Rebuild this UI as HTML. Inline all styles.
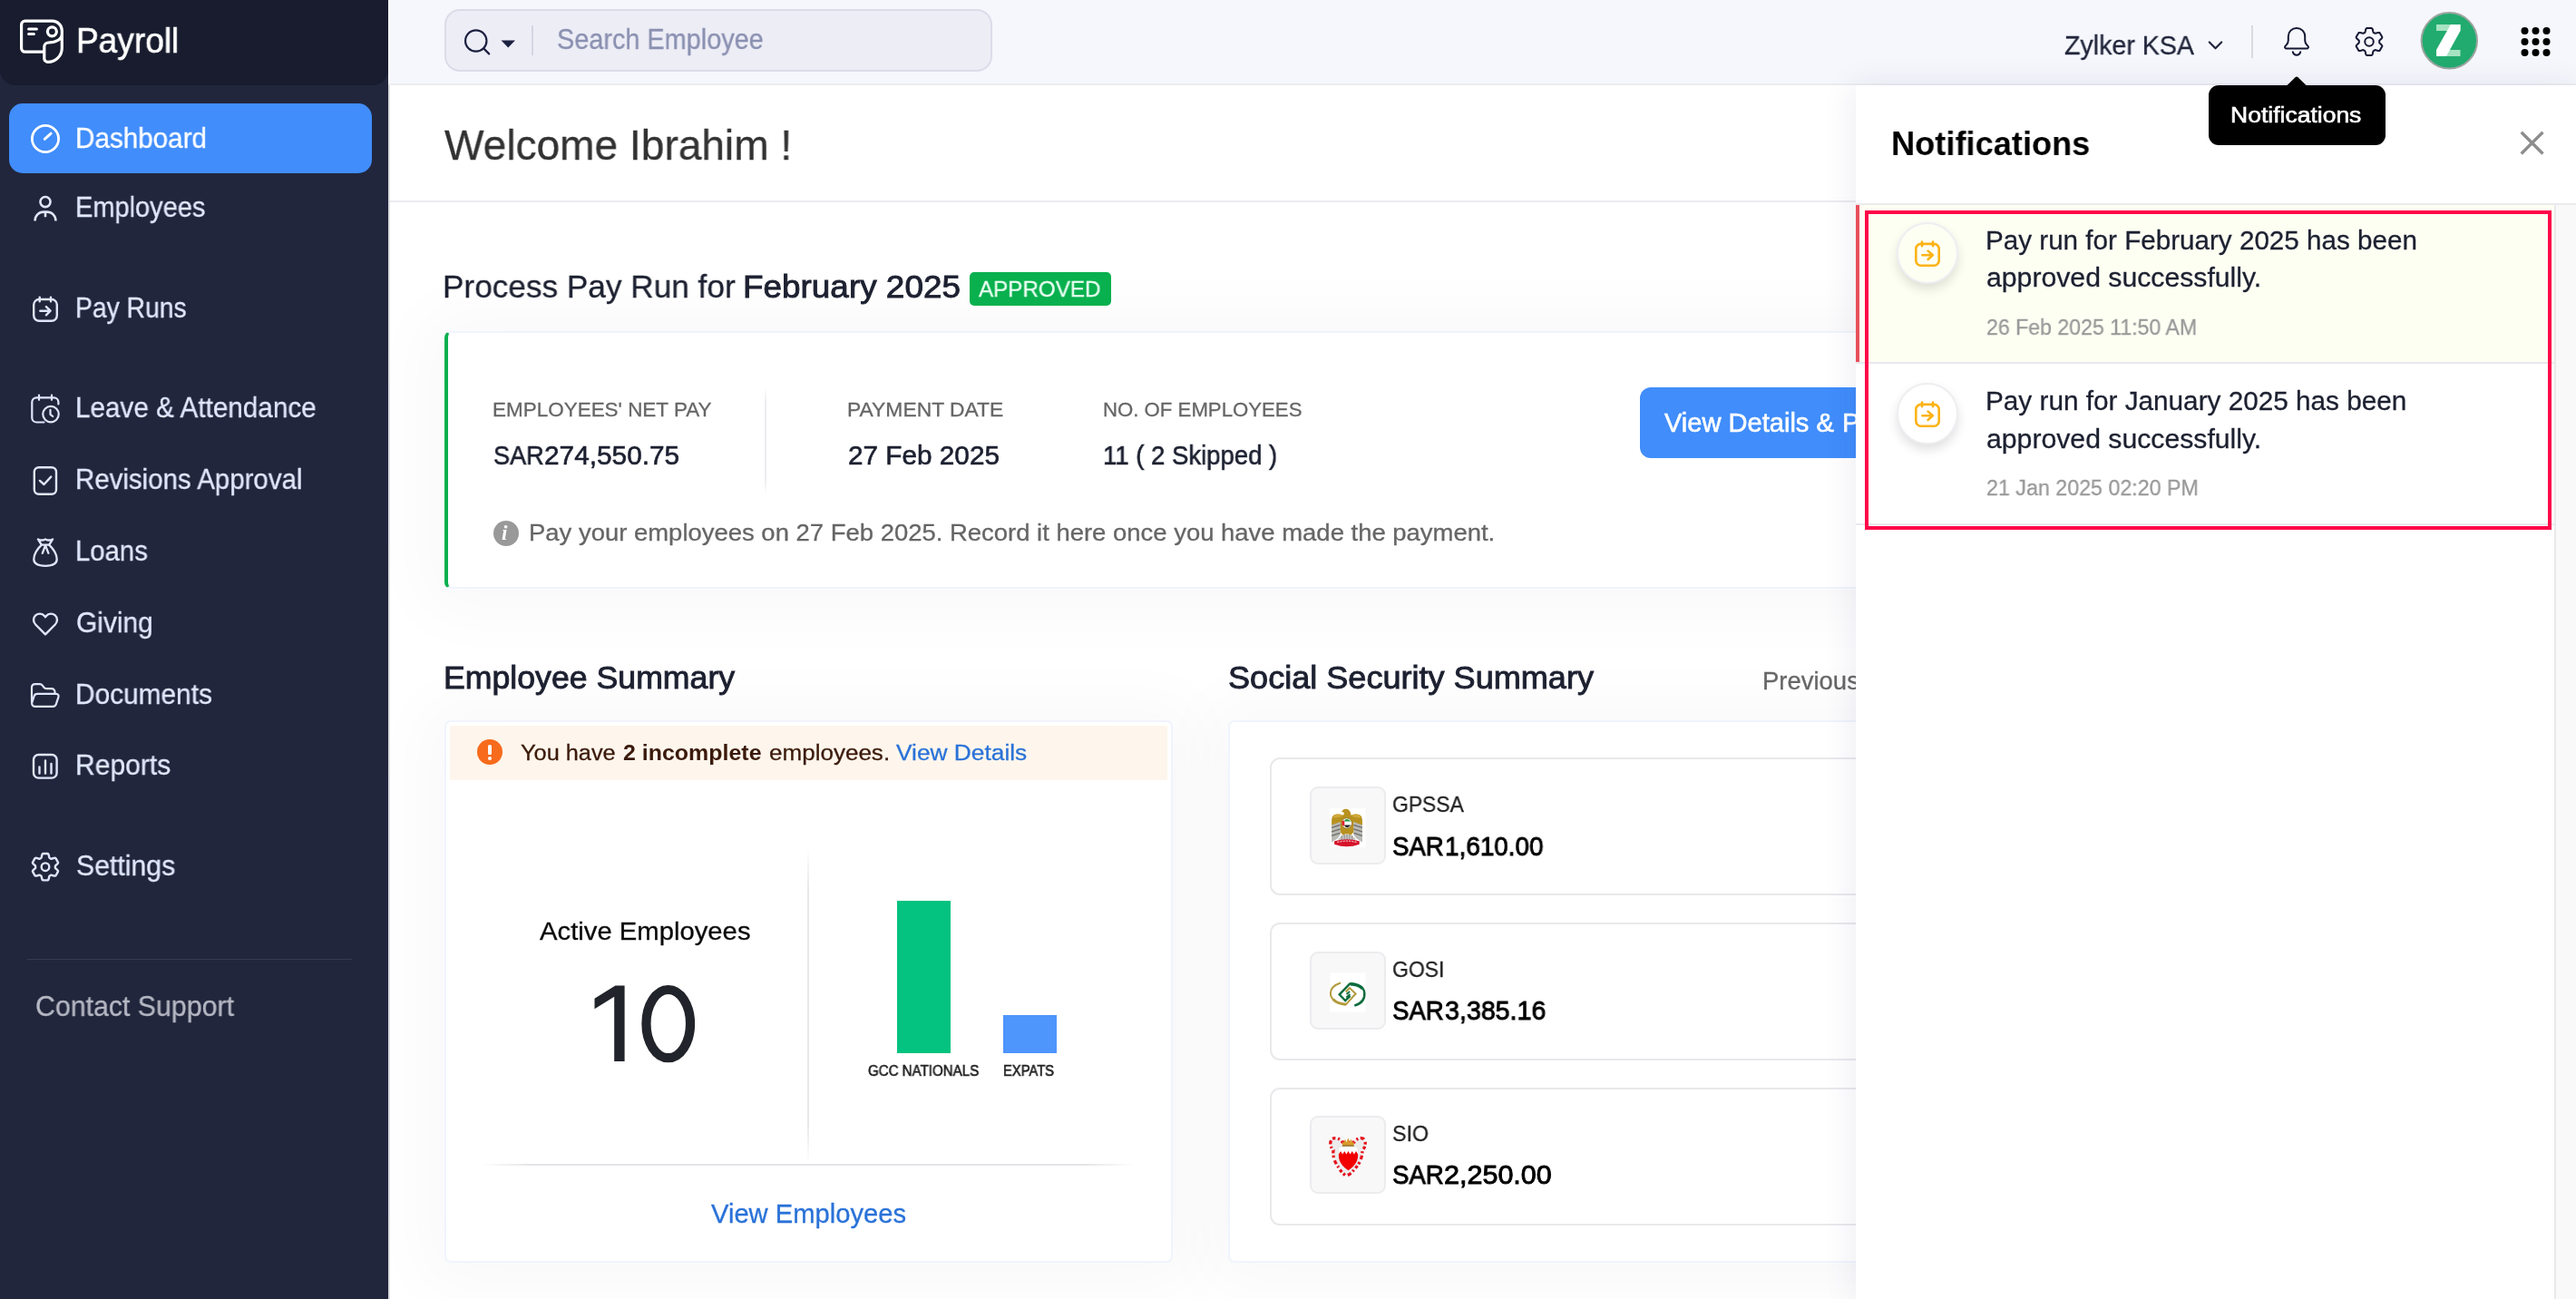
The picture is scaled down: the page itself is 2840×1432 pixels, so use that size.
<!DOCTYPE html>
<html lang="en"><head><meta charset="utf-8"><title>Payroll</title><style>
*{box-sizing:border-box}
html,body{margin:0;padding:0}
body{width:2840px;height:1432px;overflow:hidden;background:#fff;font-family:"Liberation Sans",sans-serif;position:relative}
.L{position:absolute;left:0;top:0;width:2840px;height:1432px;overflow:hidden}
.L>*{position:absolute}
.t{position:absolute;line-height:1;white-space:nowrap;will-change:transform;transform-origin:0 0}
svg.ov{position:absolute;left:0;top:0;width:2840px;height:1432px;pointer-events:none}
.card{background:#fff;border:2px solid #f0f4fc;border-radius:7px;box-shadow:0 4px 70px 24px rgba(40,40,90,.028)}
.ssi{background:#fff;border:2px solid #e9e9ec;border-radius:11px}
.lg{background:#f8f8f9;border:2px solid #ececef;border-radius:9px}
</style></head>
<body>
<div class="L" id="main" style="z-index:1">
<div style="left:428px;top:94px;width:2px;height:1338px;background:#dcdce2"></div>
<div style="left:430px;top:221px;width:2410px;height:2px;background:#ebebef"></div>
<div class="card" style="left:490px;top:365px;width:2292px;height:284px;border-left:4px solid #08b04e"></div>
<div style="left:843px;top:427px;width:2px;height:118px;background:linear-gradient(#fff,#ececf0 15%,#ececf0 85%,#fff)"></div>
<div style="left:1069px;top:300px;width:155.5px;height:37px;background:#08b04e;border-radius:5px"></div>
<div style="left:544px;top:573.5px;width:28px;height:28px;border-radius:50%;background:#999"></div>
<div class="t" style="left:552.5px;top:575.5px;font:italic bold 23px/1 'Liberation Serif',serif;color:#fff">i</div>
<div style="left:1808px;top:427px;width:330px;height:78px;background:#408dfb;border-radius:12px"></div>
<div class="card" style="left:490px;top:794px;width:803px;height:598px"></div>
<div style="left:496px;top:800px;width:791px;height:60px;background:#fef6ec"></div>
<div style="left:526px;top:815px;width:28px;height:28px;border-radius:50%;background:#f76b1c"></div>
<div style="left:538.3px;top:820.5px;width:3.6px;height:11px;background:#fff;border-radius:1.8px 1.8px 1.2px 1.2px"></div>
<div style="left:538px;top:833.5px;width:4.2px;height:4.2px;background:#fff;border-radius:50%"></div>
<div style="left:889.5px;top:935px;width:2px;height:348px;background:linear-gradient(#fff,#e9e9ec 12%,#e9e9ec 88%,#fff)"></div>
<div style="left:530px;top:1283px;width:722px;height:2px;background:linear-gradient(90deg,#fff,#e4e4e8 8%,#e4e4e8 92%,#fff)"></div>
<div style="left:988.5px;top:993px;width:59px;height:168px;background:#04c27f"></div>
<div style="left:1105.7px;top:1119px;width:59.3px;height:42px;background:#4e95fc"></div>
<div class="card" style="left:1354px;top:794px;width:803px;height:598px"></div>
<div class="ssi" style="left:1400px;top:835px;width:712px;height:152px"></div>
<div class="lg" style="left:1444px;top:866.5px;width:84px;height:86px"></div>
<div class="ssi" style="left:1400px;top:1017px;width:712px;height:152px"></div>
<div class="lg" style="left:1444px;top:1048.5px;width:84px;height:86px"></div>
<div class="ssi" style="left:1400px;top:1198.5px;width:712px;height:152px"></div>
<div class="lg" style="left:1444px;top:1230.0px;width:84px;height:86px"></div>
<svg class="ov" viewBox="0 0 2840 1432"><path d="M688.600 1086.500H678.400L655.500 1100.800V1112.300L677.200 1098.800V1170H688.600Z" fill="#21242a"/><ellipse cx="736.750" cy="1128.600" rx="24.300" ry="37.600" fill="none" stroke="#21242a" stroke-width="10.200"/><rect x="1466.3" y="890.9" width="39.200" height="43.100" fill="#fff"/><g transform="translate(1466.3,890.9)"><path d="M1.800 17L11.500 14V29L8 33.500L1.800 37.500ZM35.600 17L25.900 14V29L29.400 33.500L35.600 37.500Z" fill="#b9b9b6"/><path d="M1.800 21.500L11.500 18.500M1.800 26L11.500 23M1.800 30.500L11 27.500M35.600 21.500L25.900 18.500M35.600 26L25.900 23M35.600 30.500L26.400 27.500" stroke="#6f6d66" stroke-width="1.300" fill="none"/><path d="M9 33.500Q18.700 24 28.400 33.500L27 36.500H10.400Z" fill="#c9c9c6"/><path d="M13 30V35M15.800 28.800V35M18.700 28.400V35M21.600 28.800V35M24.400 30V35" stroke="#8b8b86" stroke-width="1" fill="none"/><path d="M17.800 .8C15.300 .5 13.600 1.800 12.800 4L15.200 4.500C15.700 5.900 15.400 7.100 14.200 7.900C11.200 6.400 7.700 6.100 5.200 7.100C2.800 8.300 1.800 10.600 1.800 13.600V18.500L11.500 15.200V26.500L14.500 29.800C17 28 20.400 28 22.900 29.800L25.900 26.500V15.200L35.600 18.500V13.600C35.600 10.600 34.600 8.300 32.200 7.100C29.700 6.100 26.200 6.400 23.200 7.900C22.900 4.400 21.600 1.400 17.800 .8Z" fill="#b8911f"/><path d="M5.200 7.100C7.700 6.100 11.200 6.400 14.200 7.900C12 10 8 11 3.500 10.500C3.800 9 4.300 7.900 5.200 7.100ZM32.200 7.100C29.700 6.100 26.200 6.400 23.200 7.900C25.400 10 29.400 11 33.900 10.500C33.600 9 33.100 7.900 32.200 7.100Z" fill="#cfa93a"/><circle cx="18.500" cy="16.600" r="5.700" fill="#fff" stroke="#8a6a14" stroke-width=".8"/><path d="M13.600 14.200A5.200 5.200 0 0 0 13.600 19.000L16 19.500V13.700Z" fill="#e5202a"/><path d="M16 13.600Q18.500 10.200 23 14.600H16Z" fill="#1f9a46"/><path d="M16 18.700H23Q19 23.500 16 19.600Z" fill="#222"/><path d="M4.800 36.300Q18.700 32.300 32.400 36.300V39.800Q18.700 44.800 4.800 39.800Z" fill="#d5132a"/><path d="M8 37.600Q18.700 34.800 29.200 37.600" stroke="#f4a9b2" stroke-width="1.300" fill="none" stroke-dasharray="2.200 1"/></g><rect x="1466.3" y="1072.5" width="39.200" height="43.100" fill="#fff"/><g transform="translate(1466.3,1072.5)" fill="none" stroke-linejoin="miter"><path d="M11.700 11C4 13.500 .6 18 .6 22.700C.6 29 8 34 17.600 34.800L28.300 23L21.600 16.600L17.400 21" stroke="#b39a3c" stroke-width="2"/><path d="M3.200 29C6.500 32.500 11.500 34.300 17.600 34.800" stroke="#b39a3c" stroke-width="3"/><path d="M27 36.200C34 34 38.600 29 38 22C37.500 15.500 30 12 21.900 11.900L10.400 23.800L16.900 30.500L22.300 25.400" stroke="#0c6b3c" stroke-width="2.400"/><path d="M22.500 12.300C28 12.500 33 14 36 17.500" stroke="#0c6b3c" stroke-width="3.400"/><path d="M21.800 20.600L18.200 23.400M22.200 23.600L18 27" stroke="#0c6b3c" stroke-width="1.900"/></g><g transform="translate(1466,1253.2)"><path d="M3 2C8 0 12 3 14 6H27C29 3 33 0 37 2C41 6 39 12 36 15C36 24 32 31 27 36C25 39 22 42 18 43C15 41 12 38 10 34C6 29 3 22 4 15C1 12-1 6 3 2Z" fill="#ececec"/><path d="M3 2C8 0 12 3 14 6H27C29 3 33 0 37 2C41 6 39 12 36 15C36 24 32 31 27 36C25 39 22 42 18 43C15 41 12 38 10 34C6 29 3 22 4 15C1 12-1 6 3 2Z" fill="none" stroke="#e5121d" stroke-width="3.300" stroke-dasharray="3.400 2.800 2 2.600 4.400 3.200 2.600 2.200"/><path d="M9.900 11H31.100V21C31 28 26 33.500 20.500 37C15 33.500 10 28 9.900 21Z" fill="#fff" stroke="#ddd" stroke-width=".6"/><path d="M9.900 19.400L12 15.700L14.100 19.400L16.300 15.700L18.400 19.400L20.500 15.700L22.600 19.400L24.700 15.700L26.900 19.400L29 15.700L31.100 19.400V21C31 28 26 33.500 20.500 37C15 33.500 10 28 9.900 21Z" fill="#f20000"/><path d="M13.900 10.300V5L15.500 6.500L17 2.500L18.600 6L20.300 1.100L22 6L23.600 2.500L25.100 6.500L26.700 5V10.300Z" fill="#d99a2b"/><path d="M13.900 9.800H26.700" stroke="#7a5e26" stroke-width="1"/></g></svg>
<div class="t" style="left:490.00px;top:137.00px;font-size:46.51px;color:#323232;transform:scaleX(0.9909);-webkit-text-stroke:0.3px #323232;">Welcome Ibrahim !</div>
<div class="t" style="left:488.00px;top:299.00px;font-size:35.41px;color:#1c2030;transform:scaleX(0.9938);-webkit-text-stroke:0.3px #1c2030;">Process Pay Run for</div>
<div class="t" style="left:819.00px;top:299.00px;font-size:35.41px;color:#1c2030;transform:scaleX(1.0419);-webkit-text-stroke:0.9px #1c2030;">February 2025</div>
<div class="t" style="left:1079.00px;top:307.00px;font-size:24.84px;color:#eafff2;transform:scaleX(0.9745);-webkit-text-stroke:0.3px #eafff2;">APPROVED</div>
<div class="t" style="left:543.00px;top:441.00px;font-size:22.2px;color:#666666;transform:scaleX(1.0127);-webkit-text-stroke:0.3px #666666;">EMPLOYEES' NET PAY</div>
<div class="t" style="left:934.00px;top:441.00px;font-size:22.2px;color:#666666;transform:scaleX(1.0303);-webkit-text-stroke:0.3px #666666;">PAYMENT DATE</div>
<div class="t" style="left:1216.00px;top:441.00px;font-size:22.2px;color:#666666;-webkit-text-stroke:0.3px #666666;">NO. OF EMPLOYEES</div>
<div class="t" style="left:544.00px;top:487.00px;font-size:29.6px;color:#1c2030;transform:scaleX(0.9153);-webkit-text-stroke:0.6px #1c2030;">SAR</div>
<div class="t" style="left:600.00px;top:487.00px;font-size:29.6px;color:#1c2030;transform:scaleX(1.0068);-webkit-text-stroke:0.6px #1c2030;">274,550.75</div>
<div class="t" style="left:935.00px;top:487.00px;font-size:29.6px;color:#1c2030;transform:scaleX(1.0046);-webkit-text-stroke:0.6px #1c2030;">27 Feb 2025</div>
<div class="t" style="left:1216.00px;top:487.00px;font-size:29.6px;color:#1c2030;transform:scaleX(0.9298);-webkit-text-stroke:0.6px #1c2030;">11 ( 2 Skipped )</div>
<div class="t" style="left:583.00px;top:574.00px;font-size:26.11px;color:#666666;transform:scaleX(1.0515);-webkit-text-stroke:0.3px #666666;">Pay your employees on 27 Feb 2025. Record it here once you have made the payment.</div>
<div class="t" style="left:1835.00px;top:452.00px;font-size:28.75px;color:#ffffff;transform:scaleX(1.0108);-webkit-text-stroke:0.6px #ffffff;">View Details &amp;</div>
<div class="t" style="left:2031.00px;top:452.00px;font-size:28.75px;color:#ffffff;-webkit-text-stroke:0.6px #ffffff;">Pay</div>
<div class="t" style="left:489.00px;top:730.00px;font-size:34.35px;color:#1c2030;transform:scaleX(1.0391);-webkit-text-stroke:0.9px #1c2030;">Employee Summary</div>
<div class="t" style="left:1354.00px;top:730.00px;font-size:34.35px;color:#1c2030;transform:scaleX(1.0509);-webkit-text-stroke:0.9px #1c2030;">Social Security Summary</div>
<div class="t" style="left:1943.00px;top:737.00px;font-size:27.48px;color:#666666;-webkit-text-stroke:0.3px #666666;">Previous Month</div>
<div class="t" style="left:574.00px;top:818.00px;font-size:24.84px;color:#3b1a0b;transform:scaleX(1.0198);-webkit-text-stroke:0.3px #3b1a0b;">You have</div>
<div class="t" style="left:687.00px;top:818.00px;font-size:24.84px;color:#3b1a0b;font-weight:700;transform:scaleX(1.0050);">2 incomplete</div>
<div class="t" style="left:847.50px;top:818.00px;font-size:24.84px;color:#3b1a0b;transform:scaleX(1.0484);-webkit-text-stroke:0.3px #3b1a0b;">employees.</div>
<div class="t" style="left:988.00px;top:818.00px;font-size:24.84px;color:#2a72d8;transform:scaleX(1.0593);-webkit-text-stroke:0.3px #2a72d8;">View Details</div>
<div class="t" style="left:595.00px;top:1012.00px;font-size:28.54px;color:#0a0a0a;transform:scaleX(1.0254);-webkit-text-stroke:0.3px #0a0a0a;">Active Employees</div>
<div class="t" style="left:956.50px;top:1173.00px;font-size:15.85px;color:#222222;transform:scaleX(0.9531);-webkit-text-stroke:0.6px #222222;">GCC NATIONALS</div>
<div class="t" style="left:1106.00px;top:1173.00px;font-size:15.85px;color:#222222;transform:scaleX(0.9322);-webkit-text-stroke:0.6px #222222;">EXPATS</div>
<div class="t" style="left:784.00px;top:1324.00px;font-size:28.75px;color:#2a72d8;transform:scaleX(1.0142);-webkit-text-stroke:0.3px #2a72d8;">View Employees</div>
<div class="t" style="left:1535.00px;top:875.00px;font-size:24.63px;color:#222222;transform:scaleX(0.9286);-webkit-text-stroke:0.3px #222222;">GPSSA</div>
<div class="t" style="left:1535.00px;top:918.00px;font-size:29.6px;color:#000000;transform:scaleX(0.9322);-webkit-text-stroke:0.9px #000000;">SAR</div>
<div class="t" style="left:1593.00px;top:918.00px;font-size:29.6px;color:#000000;transform:scaleX(0.9420);-webkit-text-stroke:0.9px #000000;">1,610.00</div>
<div class="t" style="left:1535.00px;top:1057.00px;font-size:24.63px;color:#222222;transform:scaleX(0.9322);-webkit-text-stroke:0.3px #222222;">GOSI</div>
<div class="t" style="left:1535.00px;top:1099.00px;font-size:29.6px;color:#000000;transform:scaleX(0.9322);-webkit-text-stroke:0.9px #000000;">SAR</div>
<div class="t" style="left:1592.50px;top:1099.00px;font-size:29.6px;color:#000000;transform:scaleX(0.9668);-webkit-text-stroke:0.9px #000000;">3,385.16</div>
<div class="t" style="left:1535.00px;top:1238.00px;font-size:24.63px;color:#222222;transform:scaleX(0.9440);-webkit-text-stroke:0.3px #222222;">SIO</div>
<div class="t" style="left:1535.00px;top:1280.00px;font-size:29.6px;color:#000000;transform:scaleX(0.9322);-webkit-text-stroke:0.9px #000000;">SAR</div>
<div class="t" style="left:1592.00px;top:1280.00px;font-size:29.6px;color:#000000;transform:scaleX(1.0310);-webkit-text-stroke:0.9px #000000;">2,250.00</div>
</div>
<div class="L" id="panel" style="z-index:3;left:1946px;width:894px">
<div style="left:100px;top:94px;width:794px;height:1338px;background:#fff;box-shadow:-2px 0 34px rgba(40,40,110,.085)"></div>
</div>
<div class="L" id="panel2" style="z-index:3">
<div style="left:2046px;top:224px;width:794px;height:2px;background:#ebebee"></div>
<div style="left:2816px;top:226px;width:24px;height:1206px;background:#f9f9fa;border-left:2px solid #e9e9ec"></div>
<div style="left:2046px;top:226px;width:770px;height:174px;background:#fdfff3"></div>
<div style="left:2046px;top:226px;width:4px;height:174px;background:#e8505b"></div>
<div style="left:2046px;top:399px;width:770px;height:2px;background:#e8e8ec"></div>
<div style="left:2046px;top:576.5px;width:770px;height:2px;background:#e8e8ec"></div>
<div style="left:2091px;top:245px;width:68px;height:68px;border-radius:50%;background:#fdfff3;border:2px solid #eeeef2;box-shadow:0 6px 12px rgba(0,0,0,.12)"></div>
<div style="left:2091px;top:422px;width:68px;height:68px;border-radius:50%;background:#ffffff;border:2px solid #eeeef2;box-shadow:0 6px 12px rgba(0,0,0,.12)"></div>
<div style="left:2056px;top:232px;width:757px;height:352px;border:4px solid #fe0549"></div>
<svg class="ov" viewBox="0 0 2840 1432"><g fill="none" stroke="#fcb316" stroke-width="2.600" stroke-linecap="round" stroke-linejoin="round"><rect x="2112.30" y="268.90" width="25.400" height="23.800" rx="5.500"/><path d="M2119 266.6V271.2M2131 266.6V271.2M2119.4 281.3H2130.8M2125.6 276.6L2130.9 281.3L2125.6 286"/></g><g fill="none" stroke="#fcb316" stroke-width="2.600" stroke-linecap="round" stroke-linejoin="round"><rect x="2112.30" y="445.90" width="25.400" height="23.800" rx="5.500"/><path d="M2119 443.6V448.2M2131 443.6V448.2M2119.4 458.3H2130.8M2125.6 453.6L2130.9 458.3L2125.6 463"/></g><path d="M2779.700 145.700L2803.500 169.500M2803.500 145.700L2779.700 169.500" stroke="#8e8e8e" stroke-width="3.400" fill="none"/></svg>
<div class="t" style="left:2085.00px;top:141.00px;font-size:36.47px;color:#000000;font-weight:700;transform:scaleX(0.9931);">Notifications</div>
<div class="t" style="left:2189.00px;top:250.00px;font-size:29.6px;color:#1c2030;transform:scaleX(1.0011);-webkit-text-stroke:0.3px #1c2030;">Pay run for February 2025 has been</div>
<div class="t" style="left:2190.00px;top:291.00px;font-size:29.6px;color:#1c2030;transform:scaleX(1.0204);-webkit-text-stroke:0.3px #1c2030;">approved successfully.</div>
<div class="t" style="left:2190.00px;top:349.00px;font-size:23.78px;color:#999999;transform:scaleX(0.9725);-webkit-text-stroke:0.3px #999999;">26 Feb 2025 11:50 AM</div>
<div class="t" style="left:2189.00px;top:427.00px;font-size:29.6px;color:#1c2030;transform:scaleX(1.0044);-webkit-text-stroke:0.3px #1c2030;">Pay run for January 2025 has been</div>
<div class="t" style="left:2190.00px;top:469.00px;font-size:29.6px;color:#1c2030;transform:scaleX(1.0204);-webkit-text-stroke:0.3px #1c2030;">approved successfully.</div>
<div class="t" style="left:2190.00px;top:526.00px;font-size:23.78px;color:#999999;transform:scaleX(0.9778);-webkit-text-stroke:0.3px #999999;">21 Jan 2025 02:20 PM</div>
</div>
<div class="L" id="top" style="z-index:2;height:100px">
<div style="left:428px;top:0;width:2412px;height:92px;background:#f6f7fc"></div>
<div style="left:428px;top:0;width:2px;height:92px;background:#fcfcfd"></div>
<div style="left:428px;top:92px;width:2412px;height:2px;background:#ececf0"></div>
<div style="left:490px;top:10px;width:604px;height:69px;background:#ededf6;border:2px solid #dcdce9;border-radius:17px"></div>
<div style="left:586px;top:28px;width:2px;height:33px;background:#d6d6e2"></div>
<div style="left:2482px;top:28px;width:2px;height:36px;background:#d9d9e3"></div>
<svg class="ov" viewBox="0 0 2840 1432"><g fill="none" stroke="#1c2040" stroke-width="2.2" stroke-linecap="round"><circle cx="524.75" cy="45" r="11.7"/><path d="M533.400 53.600L539.200 59.400"/></g>
<path d="M552.500 44.500H568L560.250 52.600Z" fill="#1c2040"/>
<path d="M2435.800 46.500L2442.500 53.300L2449.200 46.500" fill="none" stroke="#21263c" stroke-width="2.200" stroke-linecap="round" stroke-linejoin="round"/>
<g fill="none" stroke="#141834" stroke-width="2" stroke-linecap="round" stroke-linejoin="round"><path d="M2532 31c-5.200 0-9.200 4-9.200 9.200v4.300c0 2-.8 3.600-2.200 5.100l-.9 1c-1.300 1.400-.4 3 1.300 3h22c1.700 0 2.600-1.600 1.300-3l-.9-1c-1.400-1.500-2.200-3.100-2.200-5.100V40.200c0-5.200-4-9.200-9.200-9.200z"/><path d="M2527.800 57.300a4.300 4.300 0 0 0 8.400 0"/></g>
<g fill="none" stroke="#141834" stroke-width="2" stroke-linejoin="round"><path d="M2623.2 46.0L2623.2 45.8L2623.2 45.6L2623.2 45.4L2623.2 45.2L2623.2 45.0L2623.2 44.8L2623.4 44.6L2623.6 44.3L2623.9 44.1L2624.2 43.8L2624.5 43.5L2624.8 43.2L2625.1 42.9L2625.5 42.6L2625.7 42.3L2626.0 41.9L2626.2 41.6L2626.3 41.3L2626.3 41.0L2626.3 40.8L2626.1 40.5L2626.0 40.3L2625.9 40.1L2625.8 39.8L2625.6 39.6L2625.5 39.4L2625.4 39.1L2625.2 38.9L2625.1 38.7L2625.0 38.5L2624.8 38.2L2624.7 38.0L2624.6 37.8L2624.4 37.6L2624.3 37.3L2624.2 37.1L2624.0 36.9L2623.9 36.6L2623.8 36.4L2623.6 36.2L2623.4 36.0L2623.2 35.9L2622.8 35.9L2622.5 35.9L2622.1 35.9L2621.6 36.0L2621.2 36.1L2620.8 36.2L2620.3 36.3L2619.9 36.5L2619.6 36.6L2619.2 36.7L2618.9 36.8L2618.6 36.8L2618.4 36.8L2618.3 36.7L2618.1 36.6L2617.9 36.5L2617.8 36.3L2617.6 36.3L2617.4 36.2L2617.3 36.1L2617.1 36.0L2616.9 35.9L2616.7 35.8L2616.6 35.6L2616.5 35.4L2616.4 35.1L2616.3 34.7L2616.2 34.3L2616.1 33.9L2616.0 33.5L2615.9 33.1L2615.8 32.6L2615.7 32.2L2615.5 31.8L2615.3 31.5L2615.1 31.3L2614.9 31.1L2614.6 31.0L2614.4 31.0L2614.1 31.0L2613.8 31.0L2613.6 31.0L2613.3 31.0L2613.0 31.0L2612.8 31.0L2612.5 31.0L2612.3 31.0L2612.0 31.0L2611.7 31.0L2611.5 31.0L2611.2 31.0L2611.0 31.0L2610.7 31.0L2610.4 31.0L2610.2 31.0L2609.9 31.0L2609.6 31.0L2609.4 31.0L2609.1 31.1L2608.9 31.3L2608.7 31.5L2608.5 31.8L2608.3 32.2L2608.2 32.6L2608.1 33.1L2608.0 33.5L2607.9 33.9L2607.8 34.3L2607.7 34.7L2607.6 35.1L2607.5 35.4L2607.4 35.6L2607.3 35.8L2607.1 35.9L2606.9 36.0L2606.7 36.1L2606.6 36.2L2606.4 36.3L2606.2 36.3L2606.1 36.5L2605.9 36.6L2605.7 36.7L2605.6 36.8L2605.4 36.8L2605.1 36.8L2604.8 36.7L2604.4 36.6L2604.1 36.5L2603.7 36.3L2603.2 36.2L2602.8 36.1L2602.4 36.0L2601.9 35.9L2601.5 35.9L2601.2 35.9L2600.8 35.9L2600.6 36.0L2600.4 36.2L2600.2 36.4L2600.1 36.6L2600.0 36.9L2599.8 37.1L2599.7 37.3L2599.6 37.6L2599.4 37.8L2599.3 38.0L2599.2 38.2L2599.0 38.5L2598.9 38.7L2598.8 38.9L2598.6 39.1L2598.5 39.4L2598.4 39.6L2598.2 39.8L2598.1 40.1L2598.0 40.3L2597.9 40.5L2597.7 40.8L2597.7 41.0L2597.7 41.3L2597.8 41.6L2598.0 41.9L2598.3 42.3L2598.5 42.6L2598.9 42.9L2599.2 43.2L2599.5 43.5L2599.8 43.8L2600.1 44.1L2600.4 44.3L2600.6 44.6L2600.8 44.8L2600.8 45.0L2600.8 45.2L2600.8 45.4L2600.8 45.6L2600.8 45.8L2600.8 46.0L2600.8 46.1L2600.8 46.3L2600.8 46.5L2600.8 46.7L2600.8 46.9L2600.8 47.1L2600.6 47.3L2600.4 47.6L2600.1 47.8L2599.8 48.1L2599.5 48.4L2599.2 48.7L2598.9 49.0L2598.5 49.3L2598.3 49.6L2598.0 50.0L2597.8 50.3L2597.7 50.6L2597.7 50.9L2597.7 51.1L2597.9 51.4L2598.0 51.6L2598.1 51.8L2598.2 52.1L2598.4 52.3L2598.5 52.5L2598.6 52.8L2598.8 53.0L2598.9 53.2L2599.0 53.4L2599.2 53.7L2599.3 53.9L2599.4 54.1L2599.6 54.3L2599.7 54.6L2599.8 54.8L2600.0 55.0L2600.1 55.3L2600.2 55.5L2600.4 55.7L2600.6 55.9L2600.8 56.0L2601.2 56.0L2601.5 56.0L2601.9 56.0L2602.4 55.9L2602.8 55.8L2603.2 55.7L2603.7 55.6L2604.1 55.4L2604.4 55.3L2604.8 55.2L2605.1 55.1L2605.4 55.1L2605.6 55.1L2605.7 55.2L2605.9 55.3L2606.1 55.4L2606.2 55.6L2606.4 55.6L2606.6 55.7L2606.7 55.8L2606.9 55.9L2607.1 56.0L2607.3 56.1L2607.4 56.3L2607.5 56.5L2607.6 56.8L2607.7 57.2L2607.8 57.6L2607.9 58.0L2608.0 58.4L2608.1 58.8L2608.2 59.3L2608.3 59.7L2608.5 60.1L2608.7 60.4L2608.9 60.6L2609.1 60.8L2609.4 60.9L2609.6 60.9L2609.9 60.9L2610.2 60.9L2610.4 60.9L2610.7 60.9L2611.0 60.9L2611.2 60.9L2611.5 60.9L2611.7 60.9L2612.0 60.9L2612.3 60.9L2612.5 60.9L2612.8 60.9L2613.0 60.9L2613.3 60.9L2613.6 60.9L2613.8 60.9L2614.1 60.9L2614.4 60.9L2614.6 60.9L2614.9 60.8L2615.1 60.6L2615.3 60.4L2615.5 60.1L2615.7 59.7L2615.8 59.3L2615.9 58.8L2616.0 58.4L2616.1 58.0L2616.2 57.6L2616.3 57.2L2616.4 56.8L2616.5 56.5L2616.6 56.3L2616.7 56.1L2616.9 56.0L2617.1 55.9L2617.3 55.8L2617.4 55.7L2617.6 55.6L2617.8 55.6L2617.9 55.4L2618.1 55.3L2618.3 55.2L2618.4 55.1L2618.6 55.1L2618.9 55.1L2619.2 55.2L2619.6 55.3L2619.9 55.4L2620.3 55.6L2620.8 55.7L2621.2 55.8L2621.6 55.9L2622.1 56.0L2622.5 56.0L2622.8 56.0L2623.2 56.0L2623.4 55.9L2623.6 55.7L2623.8 55.5L2623.9 55.3L2624.0 55.0L2624.2 54.8L2624.3 54.6L2624.4 54.3L2624.6 54.1L2624.7 53.9L2624.8 53.7L2625.0 53.4L2625.1 53.2L2625.2 53.0L2625.4 52.8L2625.5 52.5L2625.6 52.3L2625.8 52.1L2625.9 51.8L2626.0 51.6L2626.1 51.4L2626.3 51.1L2626.3 50.9L2626.3 50.6L2626.2 50.3L2626.0 50.0L2625.7 49.6L2625.5 49.3L2625.1 49.0L2624.8 48.7L2624.5 48.4L2624.2 48.1L2623.9 47.8L2623.6 47.6L2623.4 47.3L2623.2 47.1L2623.2 46.9L2623.2 46.7L2623.2 46.5L2623.2 46.3L2623.2 46.1Z"/><circle cx="2612" cy="45.950" r="4.750"/></g>
<circle cx="2700.300" cy="44.800" r="30.700" fill="#21ab6f" stroke="#9ca5a0" stroke-width="2"/>
<path d="M2686 27H2712.500V34H2686Z" fill="#a6e3c2"/><path d="M2686 55H2712.500V62H2686Z" fill="#a6e3c2"/>
<path d="M2701.800 27H2712.500V34L2697 62H2686V55Z" fill="#ffffff"/>
<circle cx="2783.5" cy="34" r="4" fill="#000"/>
<circle cx="2795.5" cy="34" r="4" fill="#000"/>
<circle cx="2807.5" cy="34" r="4" fill="#000"/>
<circle cx="2783.5" cy="46" r="4" fill="#000"/>
<circle cx="2795.5" cy="46" r="4" fill="#000"/>
<circle cx="2807.5" cy="46" r="4" fill="#000"/>
<circle cx="2783.5" cy="58" r="4" fill="#000"/>
<circle cx="2795.5" cy="58" r="4" fill="#000"/>
<circle cx="2807.5" cy="58" r="4" fill="#000"/></svg>
<div class="t" style="left:614.00px;top:28.00px;font-size:30.65px;color:#8a90b0;transform:scaleX(0.9417);-webkit-text-stroke:0.3px #8a90b0;">Search Employee</div>
<div class="t" style="left:2276.00px;top:35.00px;font-size:29.6px;color:#21263c;transform:scaleX(0.9660);-webkit-text-stroke:0.3px #21263c;">Zylker KSA</div>
</div>
<div class="L" id="side" style="z-index:4;width:428px;background:#21263c">
<div style="left:0;top:0;width:428px;height:94px;background:#181c2e;border-radius:0 0 17px 17px"></div>
<div style="left:10px;top:114px;width:400px;height:77px;background:#408dfb;border-radius:15px"></div>
<div style="left:30px;top:1056.5px;width:358px;height:1.5px;background:#363b52"></div>
<svg class="ov" viewBox="0 0 2840 1432"><g fill="none" stroke="#ffffff" stroke-width="3.2" stroke-linecap="round" stroke-linejoin="round"><path d="M48.8 57.2H27.6a4 4 0 0 1-4-4V27.2a4 4 0 0 1 4-4H57.8a10.5 10.5 0 0 1 10.5 10.5V52.9a15.5 15.5 0 0 1-15.5 15.5H52.8a4 4 0 0 1-4-4V51.5a4.5 4.5 0 0 1 4.5-4.5c9 0 15-4 15-9.8"/><circle cx="57.4" cy="34.8" r="5"/><path d="M31.6 32H40.4M31.6 37.6H37.4" stroke-width="3"/></g>
<g fill="none" stroke="#ffffff" stroke-width="2.8" stroke-linecap="round"><circle cx="50" cy="153" r="14.6"/><path d="M49.2 153.4L56.2 147.1"/></g>
<g fill="none" stroke="#dfe6fb" stroke-width="2.6"><circle cx="50" cy="222.6" r="5.55"/><path d="M38.6 243.6v-.5a9.5 9.5 0 0 1 9.5-9.5h3.8a9.5 9.5 0 0 1 9.5 9.5v.5M50 233v6.3"/></g>
<g fill="none" stroke="#dfe6fb" stroke-width="2.4" stroke-linecap="round" stroke-linejoin="round"><rect x="37.2" y="330" width="25.6" height="23.8" rx="6"/><path d="M43.75 327.6V332.3M56 327.6V332.3M44.3 342.7H55.5M50.9 338.1L55.6 342.7L50.9 347.3"/></g>
<g fill="none" stroke="#dfe6fb" stroke-width="2.2" stroke-linecap="round" stroke-linejoin="round"><path d="M48.5 465.5H40.3a5 5 0 0 1-5-5V443.3a5 5 0 0 1 5-5H59.4a5 5 0 0 1 5 5V445.5M43 435.6V440.8M57 435.6V440.8"/><circle cx="56" cy="456.6" r="8.75"/><path d="M55.5 451.9V456.8L58.2 459"/></g>
<g fill="none" stroke="#dfe6fb" stroke-width="2.4" stroke-linecap="round" stroke-linejoin="round"><rect x="37.8" y="515.2" width="24.2" height="29.6" rx="5"/><path d="M43.9 529.9L48.5 534L56.2 525.6"/></g>
<g fill="none" stroke="#dfe6fb" stroke-width="2.3" stroke-linecap="round" stroke-linejoin="round"><path d="M45.8 600.6C40.2 606 37.3 612 37.3 616.6C37.3 621.6 41.5 623.8 50 623.8C58.5 623.8 62.7 621.6 62.7 616.6C62.7 612 59.8 606 54.2 600.6"/><path d="M45.8 600.6L41.9 594.4Q46 596.6 50 594.4Q54 596.6 58.1 594.4L54.2 600.6Z"/><path d="M50 601.2L46.8 609.8M50 601.2L53.4 609.8"/></g>
<g fill="none" stroke="#dfe6fb" stroke-width="2.4" stroke-linejoin="round"><path d="M50 699.3L39.2 688.5C36.3 685.6 36.3 681 39.2 678.4C42 675.9 46.5 676 49 679L50 680.2L51 679C53.5 676 58 675.9 60.8 678.4C63.7 681 63.7 685.6 60.8 688.5Z"/></g>
<g fill="none" stroke="#dfe6fb" stroke-width="2.2" stroke-linecap="round" stroke-linejoin="round"><path d="M35 774V757.6a3.5 3.5 0 0 1 3.5-3.5h5.3c1.4 0 2.4.6 3.2 1.7l1.3 1.9c.7 1 1.6 1.5 2.9 1.5H57a3.5 3.5 0 0 1 3.500 3.5V764"/><path d="M38.4 778.8a3.3 3.3 0 0 1-3.100-4.400l2.400-7.200a3.500 3.500 0 0 1 3.300-2.400H62a2.600 2.600 0 0 1 2.500 3.400l-2.700 8.200a3.500 3.500 0 0 1-3.300 2.400Z"/></g>
<g fill="none" stroke="#dfe6fb" stroke-width="2.4" stroke-linecap="round"><rect x="37" y="832" width="25.6" height="25.600" rx="5.5"/><path d="M43.500 845.500V852.500M50 838.500V852.500M56.500 842V852.500"/></g>
<g fill="none" stroke="#dfe6fb" stroke-width="2.4" stroke-linejoin="round"><path d="M60.9 955.7L60.9 955.5L60.9 955.3L60.9 955.1L60.9 954.9L60.9 954.7L60.9 954.5L61.1 954.3L61.3 954.1L61.6 953.9L61.9 953.6L62.2 953.3L62.5 953.0L62.9 952.7L63.2 952.4L63.4 952.1L63.7 951.8L63.9 951.5L64.0 951.2L64.0 950.9L64.0 950.6L63.9 950.4L63.7 950.1L63.6 949.9L63.5 949.7L63.3 949.5L63.2 949.3L63.1 949.0L63.0 948.8L62.8 948.6L62.7 948.4L62.6 948.1L62.5 947.9L62.3 947.7L62.2 947.5L62.1 947.3L61.9 947.0L61.8 946.8L61.7 946.6L61.5 946.4L61.4 946.1L61.2 946.0L60.9 945.9L60.6 945.8L60.2 945.8L59.8 945.9L59.4 945.9L59.0 946.1L58.6 946.2L58.1 946.3L57.7 946.5L57.4 946.6L57.0 946.7L56.7 946.8L56.5 946.8L56.3 946.8L56.1 946.7L55.9 946.6L55.8 946.5L55.6 946.4L55.5 946.3L55.3 946.2L55.1 946.1L54.9 946.0L54.8 945.9L54.6 945.8L54.5 945.6L54.4 945.4L54.3 945.1L54.2 944.8L54.1 944.4L54.0 944.0L54.0 943.5L53.9 943.1L53.7 942.7L53.6 942.3L53.4 941.9L53.3 941.6L53.1 941.3L52.8 941.1L52.6 941.0L52.3 941.0L52.1 941.0L51.8 941.0L51.5 941.0L51.3 941.0L51.0 941.0L50.8 941.0L50.5 941.0L50.3 941.0L50.0 941.0L49.7 941.0L49.5 941.0L49.2 941.0L49.0 941.0L48.7 941.0L48.5 941.0L48.2 941.0L47.9 941.0L47.7 941.0L47.4 941.0L47.2 941.1L46.9 941.3L46.7 941.6L46.6 941.9L46.4 942.3L46.3 942.7L46.1 943.1L46.0 943.5L46.0 944.0L45.9 944.4L45.8 944.8L45.7 945.1L45.6 945.4L45.5 945.6L45.4 945.8L45.2 945.9L45.1 946.0L44.9 946.1L44.7 946.2L44.6 946.3L44.4 946.4L44.2 946.5L44.1 946.6L43.9 946.7L43.7 946.8L43.5 946.8L43.3 946.8L43.0 946.7L42.6 946.6L42.3 946.5L41.9 946.3L41.4 946.2L41.0 946.1L40.6 945.9L40.2 945.9L39.8 945.8L39.4 945.8L39.1 945.9L38.8 946.0L38.6 946.1L38.5 946.4L38.3 946.6L38.2 946.8L38.1 947.0L37.9 947.3L37.8 947.5L37.7 947.7L37.5 947.9L37.4 948.1L37.3 948.4L37.2 948.6L37.0 948.8L36.9 949.0L36.8 949.3L36.7 949.5L36.5 949.7L36.4 949.9L36.3 950.1L36.1 950.4L36.0 950.6L36.0 950.9L36.0 951.2L36.1 951.5L36.3 951.8L36.6 952.1L36.8 952.4L37.1 952.7L37.5 953.0L37.8 953.3L38.1 953.6L38.4 953.9L38.7 954.1L38.9 954.3L39.1 954.5L39.1 954.7L39.1 954.9L39.1 955.1L39.1 955.3L39.1 955.5L39.1 955.7L39.1 955.9L39.1 956.1L39.1 956.3L39.1 956.5L39.1 956.7L39.1 956.9L38.9 957.1L38.7 957.3L38.4 957.5L38.1 957.8L37.8 958.1L37.5 958.4L37.1 958.7L36.8 959.0L36.6 959.3L36.3 959.6L36.1 959.9L36.0 960.2L36.0 960.5L36.0 960.8L36.1 961.0L36.3 961.3L36.4 961.5L36.5 961.7L36.7 961.9L36.8 962.1L36.9 962.4L37.0 962.6L37.2 962.8L37.3 963.0L37.4 963.3L37.5 963.5L37.7 963.7L37.8 963.9L37.9 964.1L38.1 964.4L38.2 964.6L38.3 964.8L38.5 965.0L38.6 965.3L38.8 965.4L39.1 965.5L39.4 965.6L39.8 965.6L40.2 965.5L40.6 965.5L41.0 965.3L41.4 965.2L41.9 965.1L42.3 964.9L42.6 964.8L43.0 964.7L43.3 964.6L43.5 964.6L43.7 964.6L43.9 964.7L44.1 964.8L44.2 964.9L44.4 965.0L44.5 965.1L44.7 965.2L44.9 965.3L45.1 965.4L45.2 965.5L45.4 965.6L45.5 965.8L45.6 966.0L45.7 966.3L45.8 966.6L45.9 967.0L46.0 967.4L46.0 967.9L46.1 968.3L46.3 968.7L46.4 969.1L46.6 969.5L46.7 969.8L46.9 970.1L47.2 970.3L47.4 970.4L47.7 970.4L47.9 970.4L48.2 970.4L48.5 970.4L48.7 970.4L49.0 970.4L49.2 970.4L49.5 970.4L49.7 970.4L50.0 970.4L50.3 970.4L50.5 970.4L50.8 970.4L51.0 970.4L51.3 970.4L51.5 970.4L51.8 970.4L52.1 970.4L52.3 970.4L52.6 970.4L52.8 970.3L53.1 970.1L53.3 969.8L53.4 969.5L53.6 969.1L53.7 968.7L53.9 968.3L54.0 967.9L54.0 967.4L54.1 967.0L54.2 966.6L54.3 966.3L54.4 966.0L54.5 965.8L54.6 965.6L54.8 965.5L54.9 965.4L55.1 965.3L55.3 965.2L55.5 965.1L55.6 965.0L55.8 964.9L55.9 964.8L56.1 964.7L56.3 964.6L56.5 964.6L56.7 964.6L57.0 964.7L57.4 964.8L57.7 964.9L58.1 965.1L58.6 965.2L59.0 965.3L59.4 965.5L59.8 965.5L60.2 965.6L60.6 965.6L60.9 965.5L61.2 965.4L61.4 965.3L61.5 965.0L61.7 964.8L61.8 964.6L61.9 964.4L62.1 964.1L62.2 963.9L62.3 963.7L62.5 963.5L62.6 963.3L62.7 963.0L62.8 962.8L63.0 962.6L63.1 962.4L63.2 962.1L63.3 961.9L63.5 961.7L63.6 961.5L63.7 961.3L63.9 961.0L64.0 960.8L64.0 960.5L64.0 960.2L63.9 959.9L63.7 959.6L63.4 959.3L63.2 959.0L62.9 958.7L62.5 958.4L62.2 958.1L61.9 957.8L61.6 957.5L61.3 957.3L61.1 957.1L60.9 956.9L60.9 956.7L60.9 956.5L60.9 956.3L60.9 956.1L60.9 955.9Z"/><circle cx="50" cy="955.7" r="4.3"/></g></svg>
<div class="t" style="left:84.00px;top:25.00px;font-size:39.11px;color:#ffffff;transform:scaleX(0.9474);-webkit-text-stroke:0.6px #ffffff;">Payroll</div>
<div class="t" style="left:83.00px;top:137.00px;font-size:30.65px;color:#ffffff;transform:scaleX(0.9675);-webkit-text-stroke:0.3px #ffffff;">Dashboard</div>
<div class="t" style="left:83.00px;top:213.00px;font-size:30.65px;color:#e0e7fc;transform:scaleX(0.9463);-webkit-text-stroke:0.3px #e0e7fc;">Employees</div>
<div class="t" style="left:83.00px;top:324.00px;font-size:30.65px;color:#e0e7fc;transform:scaleX(0.9231);-webkit-text-stroke:0.3px #e0e7fc;">Pay Runs</div>
<div class="t" style="left:83.00px;top:434.00px;font-size:30.65px;color:#e0e7fc;transform:scaleX(0.9686);-webkit-text-stroke:0.3px #e0e7fc;">Leave &amp; Attendance</div>
<div class="t" style="left:83.00px;top:513.00px;font-size:30.65px;color:#e0e7fc;transform:scaleX(0.9611);-webkit-text-stroke:0.3px #e0e7fc;">Revisions Approval</div>
<div class="t" style="left:83.00px;top:592.00px;font-size:30.65px;color:#e0e7fc;transform:scaleX(0.9569);-webkit-text-stroke:0.3px #e0e7fc;">Loans</div>
<div class="t" style="left:84.00px;top:671.00px;font-size:30.65px;color:#e0e7fc;transform:scaleX(0.9762);-webkit-text-stroke:0.3px #e0e7fc;">Giving</div>
<div class="t" style="left:83.00px;top:750.00px;font-size:30.65px;color:#e0e7fc;transform:scaleX(0.9737);-webkit-text-stroke:0.3px #e0e7fc;">Documents</div>
<div class="t" style="left:83.00px;top:828.00px;font-size:30.65px;color:#e0e7fc;transform:scaleX(0.9808);-webkit-text-stroke:0.3px #e0e7fc;">Reports</div>
<div class="t" style="left:84.00px;top:939.00px;font-size:30.65px;color:#e0e7fc;transform:scaleX(0.9863);-webkit-text-stroke:0.3px #e0e7fc;">Settings</div>
<div class="t" style="left:39.00px;top:1094.00px;font-size:30.65px;color:#b5b7c3;transform:scaleX(0.9887);-webkit-text-stroke:0.3px #b5b7c3;">Contact Support</div>
</div>
<div class="L" id="tip" style="z-index:5">
<div style="left:2435px;top:94px;width:195px;height:65.5px;background:#000;border-radius:11px"></div>
<svg class="ov" viewBox="0 0 2840 1432"><path d="M2520.500 95L2530.500 85.200Q2532 84 2533.500 85.200L2543.500 95Z" fill="#000"/></svg>
<div class="t" style="left:2459.00px;top:115.00px;font-size:24.63px;color:#ffffff;transform:scaleX(1.0764);-webkit-text-stroke:0.6px #ffffff;">Notifications</div>
</div>
</body></html>
